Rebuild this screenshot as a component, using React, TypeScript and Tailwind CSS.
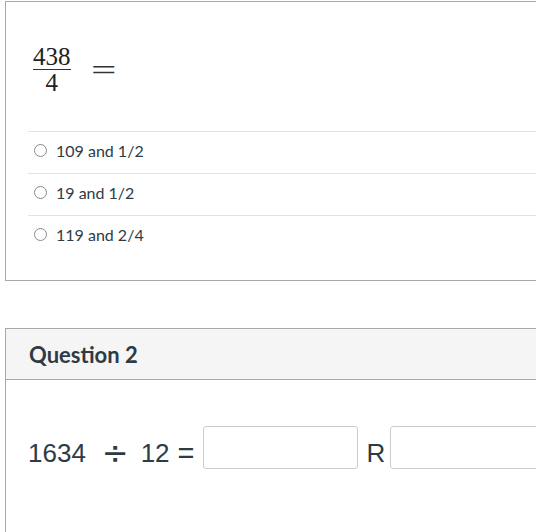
import React from "react";

const options = ["109 and 1/2", "19 and 1/2", "119 and 2/4"];

export default function App() {
  return (
    <div className="w-[536px] h-[532px] overflow-hidden bg-white pl-[5px] pt-[1px] text-[#2d3b45]">
      {/* Card 1 */}
      <div className="w-[620px] border border-[#a9a9a9] pl-[22px] pt-[42px] pb-[23px]">
        <div className="flex items-center ml-[5px] font-['Liberation_Serif',serif] text-[#222]">
          <div className="inline-flex flex-col items-stretch">
            <span className="text-[25px] leading-none text-center">438</span>
            <span className="block h-px bg-[#333]" />
            <span className="text-[25px] leading-none text-center">4</span>
          </div>
          <span className="ml-[20px] text-[30px] leading-none text-[#333] scale-x-[1.5] origin-left">=</span>
        </div>
        <div className="mt-[36px]">
          {options.map((o) => (
            <div
              key={o}
              className="h-[42px] border-t border-[#e2e2e2] flex items-center pl-[6px] pb-[4px]"
            >
              <span className="w-[13px] h-[13px] rounded-full border border-[#8a8a8a] bg-white shrink-0" />
              <span className="ml-[9px] text-[16px] leading-none font-['Lato',sans-serif] text-[#2d3b45]">
                {o}
              </span>
            </div>
          ))}
        </div>
      </div>

      {/* Card 2 */}
      <div className="mt-[47px] w-[620px] border border-[#a9a9a9]">
        <div className="h-[51px] bg-[#f5f5f5] border-b border-[#a9a9a9] flex items-center pl-[23px]">
          <span className="text-[22px] font-bold font-['Lato',sans-serif] text-[#2d3b45]">Question 2</span>
        </div>
        <div className="pl-[22px] pt-[46px] pb-[120px] flex items-start font-['Liberation_Sans',sans-serif] text-[#2d3b45]">
          <span className="mt-[14px] text-[26px] leading-none">1634</span>
          <span className="mt-[11px] ml-[16px] text-[32px] leading-none font-['DejaVu_Sans',sans-serif]">÷</span>
          <span className="mt-[14px] ml-[12px] text-[26px] leading-none">12</span>
          <span className="mt-[13px] ml-[8px] text-[29px] leading-none">=</span>
          <div className="ml-[8px] w-[155px] h-[43px] border border-[#cccccc] rounded-[3px] bg-white shrink-0" />
          <span className="mt-[14px] ml-[9px] text-[26px] leading-none">R</span>
          <div className="ml-[5px] w-[200px] h-[43px] border border-[#cccccc] rounded-[3px] bg-white shrink-0" />
        </div>
      </div>
    </div>
  );
}
